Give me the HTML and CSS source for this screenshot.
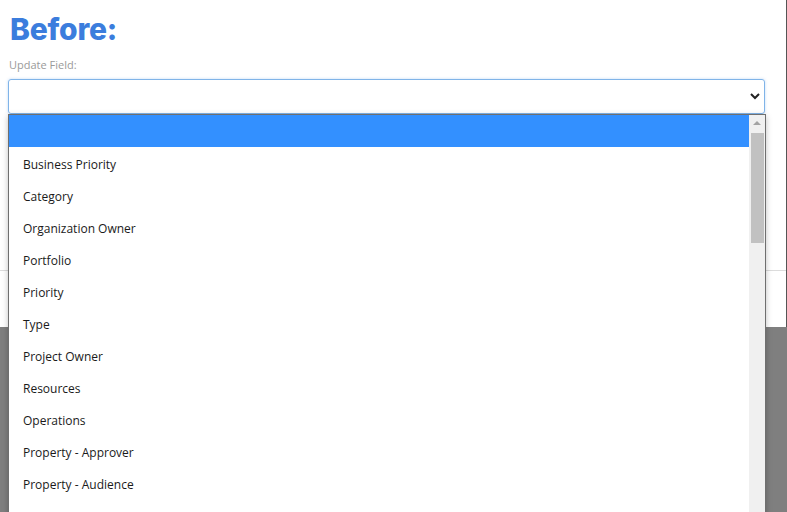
FILE: index.html
```html
<!DOCTYPE html>
<html>
<head>
<meta charset="utf-8">
<link rel="stylesheet" href="styles.css">
</head>
<body>
<div class="panel">
  <div class="content">
    <h1 class="title">Before:</h1>
    <div class="label">Update Field:</div>
    <div class="select">
      <svg class="chev" width="10" height="7" viewBox="0 0 10 7"><polyline points="1,1 5,5 9,1" fill="none" stroke="#222" stroke-width="2"/></svg>
    </div>
  </div>
  <div class="spacer"></div>
  <div class="footer"></div>
</div>
<div class="list">
  <div class="options">
    <div class="opt sel">&nbsp;</div>
    <div class="opt">Business Priority</div>
    <div class="opt">Category</div>
    <div class="opt">Organization Owner</div>
    <div class="opt">Portfolio</div>
    <div class="opt">Priority</div>
    <div class="opt">Type</div>
    <div class="opt">Project Owner</div>
    <div class="opt">Resources</div>
    <div class="opt">Operations</div>
    <div class="opt">Property - Approver</div>
    <div class="opt">Property - Audience</div>
  </div>
  <div class="scrollbar">
    <div class="arrow"></div>
    <div class="thumb"></div>
  </div>
</div>
</body>
</html>
```
FILE: styles.css
```css
html, body {
  margin: 0;
  padding: 0;
  height: 100%;
  overflow: hidden;
}
body {
  background: #7f7f7f;
  font-family: "Open Sans", "Noto Sans", sans-serif;
}
.panel {
  width: 786px;
  height: 327px;
  background: #fff;
  border-right: 1px solid #555;
  display: flex;
  flex-direction: column;
}
.content {
  padding: 12px 8px 0 8px;
}
.title {
  margin: 0 0 0 2px;
  font-family: "Inter", sans-serif;
  font-weight: 800;
  font-size: 30px;
  line-height: 34px;
  letter-spacing: -0.2px;
  color: #3b7ddd;
}
.label {
  margin: 12px 0 0 1px;
  font-size: 11px;
  line-height: 14px;
  color: #9a9a9a;
}
.select {
  margin-top: 7px;
  width: 757px;
  height: 35px;
  box-sizing: border-box;
  border: 1px solid #80b4e8;
  border-radius: 3px;
  box-shadow: 0 0 3px rgba(80,150,230,0.35);
  display: flex;
  align-items: center;
  justify-content: flex-end;
  padding-right: 4px;
}
.spacer {
  flex: 1;
}
.footer {
  height: 56px;
  border-top: 1px solid #dcdcdc;
}
.list {
  position: absolute;
  left: 8px;
  top: 114px;
  width: 758px;
  height: 420px;
  box-sizing: border-box;
  background: #fff;
  border: 1px solid #6f6f6f;
  box-shadow: 0 2px 6px rgba(0,0,0,0.25);
  display: flex;
}
.options {
  flex: 1;
}
.opt {
  height: 32px;
  box-sizing: border-box;
  padding-top: 4px;
  line-height: 28px;
  padding-left: 14px;
  font-size: 12px;
  color: #1a1a1a;
}
.opt.sel {
  background: #3390ff;
}
.scrollbar {
  width: 16px;
  background: #f0f0f0;
  display: flex;
  flex-direction: column;
  align-items: center;
}
.arrow {
  margin-top: 6px;
  width: 0;
  height: 0;
  border-left: 4px solid transparent;
  border-right: 4px solid transparent;
  border-bottom: 4px solid #a3a3a3;
}
.thumb {
  margin-top: 8px;
  width: 13px;
  height: 110px;
  background: #c1c1c1;
}
```
